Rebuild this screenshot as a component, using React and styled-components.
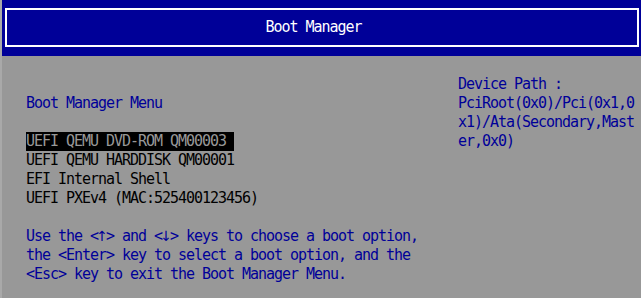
import React from 'react';
import styled, { createGlobalStyle } from 'styled-components';

const GlobalStyle = createGlobalStyle`
html, body {
    margin: 0;
    padding: 0;
    background: #989898;
}
`;

const Screen = styled.div`
width: 641px;
height: 298px;
box-sizing: border-box;
border-left: 2px solid #a9a9a9;
background: #989898;
overflow: hidden;
font-family: "DejaVu Sans Mono", "Liberation Mono", monospace;
font-size: 15px;
letter-spacing: -1.03px;
line-height: 19px;
`;

const Header = styled.div`
height: 56px;
box-sizing: border-box;
padding: 8px 2px 9px 3px;
background: #000098;
`;

const TitleBox = styled.div`
height: 100%;
box-sizing: border-box;
border: 2px solid #ffffff;
display: flex;
align-items: center;
justify-content: center;
padding-right: 17px;
color: #ffffff;
`;

const Body = styled.div`
display: flex;
padding-left: 24px;
`;

const Main = styled.div`
width: 432px;
padding-top: 38px;
`;

const Side = styled.div`
width: 180px;
padding-top: 19px;
color: #000098;
word-break: break-all;
`;

const Line = styled.div`
height: 19px;
white-space: pre;
color: ${p => p.blue ? '#000098' : '#000000'};
`;

const Gap = styled.div`
height: 19px;
`;

const Option = styled.span`
display: inline-block;
height: 19px;
padding-right: 8px;
background: ${p => p.selected ? '#000000' : 'transparent'};
color: ${p => p.selected ? '#989898' : '#000000'};
`;

const Arrow = styled.span`
display: inline-flex;
justify-content: center;
width: 8px;
height: 19px;
font-family: "DejaVu Sans", sans-serif;
font-size: 14px;
letter-spacing: 0;
line-height: 19px;
vertical-align: top;
`;

const options = [
    'UEFI QEMU DVD-ROM QM00003',
    'UEFI QEMU HARDDISK QM00001',
    'EFI Internal Shell',
    'UEFI PXEv4 (MAC:525400123456)',
];

const App = () => {
    return (
        <Screen>
            <GlobalStyle/>
            <Header>
                <TitleBox>Boot Manager</TitleBox>
            </Header>
            <Body>
                <Main>
                    <Line blue>Boot Manager Menu</Line>
                    <Gap/>
                    {options.map((o, i) => (
                        <Line key={o}>
                            <Option selected={i === 0}>{o}</Option>
                        </Line>
                    ))}
                    <Gap/>
                    <Line blue>
                        Use the &lt;<Arrow>↑</Arrow>&gt; and &lt;<Arrow>↓</Arrow>&gt; keys to choose a boot option,
                    </Line>
                    <Line blue>the &lt;Enter&gt; key to select a boot option, and the</Line>
                    <Line blue>&lt;Esc&gt; key to exit the Boot Manager Menu.</Line>
                </Main>
                <Side>
                    <div>Device Path :</div>
                    <div>PciRoot(0x0)/Pci(0x1,0x1)/Ata(Secondary,Master,0x0)</div>
                </Side>
            </Body>
        </Screen>
    )
};

export default App;
